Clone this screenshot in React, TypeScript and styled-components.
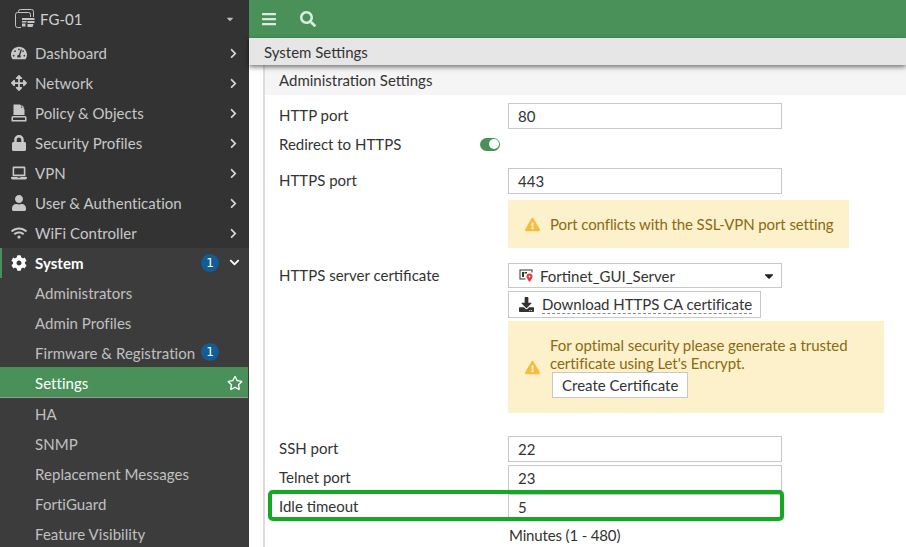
import React from "react";
import styled, { createGlobalStyle } from "styled-components";
import {
  FaTachometerAlt, FaArrowsAlt, FaLock, FaLaptop, FaUser, FaWifi, FaCog, FaRegStar,
  FaExclamationTriangle, FaSearch, FaBars, FaChevronRight, FaChevronDown, FaDownload, FaCaretDown,
} from "react-icons/fa";

const Global = createGlobalStyle`
  html, body { margin: 0; padding: 0; width: 906px; height: 547px; overflow: hidden; background: #fff; }
  body { font-family: Lato, "Open Sans", sans-serif; font-size: 15px; color: #333; }
  * { box-sizing: border-box; }
`;

const Page = styled.div`
  display: flex;
  width: 906px;
  height: 547px;
  overflow: hidden;
  position: relative;
`;

const Sidebar = styled.nav`
  width: 249px;
  flex: none;
  height: 547px;
  background: #3c3c3c;
  color: #c8c8c8;
  display: flex;
  flex-direction: column;
  letter-spacing: 0.05px;
`;

const TopNav = styled.div`
  background: #333;
  height: 248px;
  flex: none;
`;

const DeviceRow = styled.div`
  display: flex;
  align-items: center;
  height: 38px;
  padding-left: 15px;
  gap: 4px;
  color: #d0d0d0;
`;

const DeviceCaret = styled.span`
  margin-left: auto;
  margin-right: 14px;
  display: flex;
  font-size: 10px;
  color: #bbb;
`;

const Item = styled.div<{ $bold?: boolean }>`
  display: flex;
  align-items: center;
  height: 30px;
  padding-left: 11px;
  font-weight: ${(p) => (p.$bold ? 700 : 400)};
  color: ${(p) => (p.$bold ? "#fff" : "#c8c8c8")};
`;

const NavIcon = styled.span`
  width: 24px;
  flex: none;
  display: flex;
  align-items: center;
  font-size: 16px;
  color: inherit;
`;

const Chevron = styled.span`
  margin-left: auto;
  margin-right: 10px;
  display: flex;
  font-size: 11px;
  color: #d8d8d8;
`;

const SystemItem = styled(Item)`
  border-left: 2px solid #4a9159;
  padding-left: 9px;
`;

const SubItem = styled.div<{ $active?: boolean; $after?: boolean }>`
  display: flex;
  align-items: center;
  height: ${(p) => (p.$active ? 31 : 30)}px;
  padding-left: 35px;
  padding-top: ${(p) => (p.$after ? 3 : 1)}px;
  background: ${(p) => (p.$active ? "#4a9159" : "transparent")};
  color: ${(p) => (p.$active ? "#fff" : "#c0c0c0")};
  border-bottom: ${(p) => (p.$active ? "1px solid #9a9a9a" : "none")};
  margin-right: ${(p) => (p.$active ? 1 : 0)}px;
`;

const Badge = styled.span`
  width: 18px;
  height: 18px;
  border-radius: 50%;
  background: #125d96;
  color: #fff;
  font-family: "DejaVu Sans", sans-serif;
  font-size: 12px;
  font-weight: 400;
  display: flex;
  align-items: center;
  justify-content: center;
  flex: none;
`;

const SystemBadge = styled(Badge)`
  margin-left: auto;
`;

const SystemChevron = styled(Chevron)`
  margin-left: 10px;
  margin-right: 9px;
  color: #fff;
`;

const SubBadge = styled(Badge)`
  margin-left: 6px;
  margin-top: -1px;
`;

const StarIcon = styled.span`
  margin-left: auto;
  margin-right: 5px;
  display: flex;
  font-size: 16px;
  color: #fff;
`;

const Main = styled.main`
  flex: 1;
  min-width: 0;
  display: flex;
  flex-direction: column;
  background: #fff;
`;

const TopBar = styled.header`
  height: 38px;
  flex: none;
  background: #4a9159;
  display: flex;
  align-items: center;
  padding-left: 12px;
  gap: 23px;
  color: #dcebdf;
  font-size: 16px;
`;

const SubHeader = styled.div`
  height: 27px;
  flex: none;
  background: #e6e6e6;
  display: flex;
  align-items: center;
  padding-left: 15px;
  color: #333;
  box-shadow: 0 2px 5px rgba(0, 0, 0, 0.55);
  position: relative;
  z-index: 1;
`;

const Panel = styled.section`
  margin-left: 14px;
  border-left: 2px solid #dcdcdc;
  flex: 1;
  display: flex;
  flex-direction: column;
`;

const PanelTitle = styled.div`
  height: 30px;
  flex: none;
  background: #f5f5f5;
  display: flex;
  align-items: center;
  padding-left: 14px;
  color: #333;
`;

const Form = styled.div`
  padding: 8px 0 0 14px;
  display: flex;
  flex-direction: column;
`;

const Row = styled.div<{ $mt?: number }>`
  display: grid;
  grid-template-columns: 229px 1fr;
  align-items: start;
  margin-top: ${(p) => p.$mt ?? 0}px;
`;

const Label = styled.div`
  height: 26px;
  padding-bottom: 2px;
  display: flex;
  align-items: center;
  color: #333;
`;

const SwitchCell = styled.div`
  display: flex;
  align-items: center;
  height: 26px;
  margin-left: -28px;
  padding-bottom: 2px;
`;

const Field = styled.div`
  display: flex;
  flex-direction: column;
  align-items: flex-start;
`;

const Input = styled.div`
  width: 274px;
  height: 26px;
  border: 1px solid #c8c8c8;
  background: #fff;
  display: flex;
  align-items: center;
  padding-left: 9px;
  color: #333;
`;

const Toggle = styled.span`
  width: 20px;
  height: 13px;
  border-radius: 7px;
  background: #4a9159;
  display: flex;
  align-items: center;
  justify-content: flex-end;
  padding-right: 1px;
`;

const Knob = styled.span`
  width: 10px;
  height: 10px;
  border-radius: 50%;
  background: #fff;
`;

const Warning = styled.div<{ $w: number; $h: number; $mt: number; $ls: number }>`
  width: ${(p) => p.$w}px;
  height: ${(p) => p.$h}px;
  margin-top: ${(p) => p.$mt}px;
  background: #fdf1cc;
  color: #8a6a10;
  display: flex;
  align-items: center;
  padding-left: 17px;
  gap: 10px;
  line-height: 18px;
  letter-spacing: ${(p) => p.$ls}px;
`;

const WarnIcon = styled.span`
  color: #f5bd3b;
  display: flex;
  font-size: 15px;
  flex: none;
`;

const WarnBody = styled.div`
  display: flex;
  flex-direction: column;
  align-items: flex-start;
`;

const Select = styled(Input)`
  height: 25px;
  padding-left: 10px;
  gap: 6px;
`;

const SelectCaret = styled.span`
  margin-left: auto;
  margin-right: 5px;
  display: flex;
  font-size: 14px;
  color: #222;
`;

const Button = styled.div`
  height: 27px;
  margin-top: 3px;
  border: 1px solid #c8c8c8;
  background: #fff;
  display: flex;
  align-items: center;
  padding: 0 8px 0 10px;
  gap: 8px;
  color: #333;
  letter-spacing: -0.04px;
`;

const Dashed = styled.span`
  border-bottom: 1px dashed #888;
  line-height: 17px;
`;

const CreateButton = styled.div`
  height: 26px;
  margin: 0 0 0 2px;
  padding: 0 9px;
  border: 1px solid #c8c8c8;
  background: #fff;
  color: #333;
  display: flex;
  align-items: center;
  letter-spacing: 0;
`;

const Hint = styled.div`
  height: 20px;
  margin-top: 5px;
  margin-left: 1px;
  display: flex;
  align-items: center;
  color: #333;
  letter-spacing: -0.15px;
`;

const Highlight = styled.div`
  position: absolute;
  left: 268px;
  top: 490px;
  width: 516px;
  height: 31px;
  border: 4px solid #14a825;
  border-radius: 5px;
  box-shadow: 0 0 1px rgba(0, 0, 0, 0.5);
  pointer-events: none;
`;

const PolicyIcon = () => (
  <svg width="16" height="18" viewBox="0 0 16 18" fill="currentColor">
    <path d="M2.500 0.500h6.500l1 1v2.500h2.500l1 1.500v5.500H2.500z" />
    <path d="M10.500 0.700l3 3h-3z" />
    <path d="M2 12h12a1.500 1.500 0 0 1 1.500 1.500V17.500H.5v-4A1.500 1.500 0 0 1 2 12zm0 1.500V16h12v-2.500z" fillRule="evenodd" />
  </svg>
);

const DeviceIcon = () => (
  <svg width="21" height="20" viewBox="0 0 21 20" fill="none" stroke="#c4c4c4" strokeWidth="1">
    <rect x="3.500" y="0.500" width="15" height="15" rx="2" />
    <rect x="0.500" y="3.500" width="15" height="15" rx="2" fill="#333" />
    <rect x="6" y="8" width="15" height="11" fill="#333" stroke="none" />
    <path d="M7 9h12.500v2H7z" fill="#c4c4c4" stroke="none" />
    <path d="M7 12h4.500v1.600H7zM7 14.600h3.500v2.900H7zM12.500 12h7v2h-7zM12.500 15h6l-1 3h-5z" fill="#c4c4c4" stroke="none" />
  </svg>
);

const CertIcon = () => (
  <svg width="15" height="15" viewBox="0 0 15 15">
    <path d="M0.500 1.500h13v3h-1v-2h-11v8h5v1h-6z" fill="#333" />
    <path d="M3 4h2v5H3zM5.500 4H8v1.500H5.500z" fill="#333" />
    <path d="M10.500 5.500a3 3 0 0 1 3 3c0 2-3 5.500-3 5.500s-3-3.500-3-5.500a3 3 0 0 1 3-3z" fill="#e4343c" />
    <circle cx="10.500" cy="8.500" r="1" fill="#fff" />
  </svg>
);

const nav: [React.ReactNode, string][] = [
  [<FaTachometerAlt />, "Dashboard"],
  [<FaArrowsAlt />, "Network"],
  [<PolicyIcon />, "Policy & Objects"],
  [<FaLock />, "Security Profiles"],
  [<FaLaptop />, "VPN"],
  [<FaUser />, "User & Authentication"],
  [<FaWifi />, "WiFi Controller"],
];

export default function App() {
  return (
    <Page>
      <Global />
      <Sidebar>
        <TopNav>
          <DeviceRow>
            <DeviceIcon />
            FG-01
            <DeviceCaret><FaCaretDown /></DeviceCaret>
          </DeviceRow>
          {nav.map(([icon, label]) => (
            <Item key={label}>
              <NavIcon>{icon}</NavIcon>
              {label}
              <Chevron><FaChevronRight /></Chevron>
            </Item>
          ))}
        </TopNav>
        <SystemItem $bold>
          <NavIcon><FaCog /></NavIcon>
          System
          <SystemBadge>1</SystemBadge>
          <SystemChevron><FaChevronDown /></SystemChevron>
        </SystemItem>
        <SubItem>Administrators</SubItem>
        <SubItem>Admin Profiles</SubItem>
        <SubItem>Firmware &amp; Registration<SubBadge>1</SubBadge></SubItem>
        <SubItem $active>Settings<StarIcon><FaRegStar /></StarIcon></SubItem>
        <SubItem $after>HA</SubItem>
        <SubItem $after>SNMP</SubItem>
        <SubItem $after>Replacement Messages</SubItem>
        <SubItem $after>FortiGuard</SubItem>
        <SubItem $after>Feature Visibility</SubItem>
      </Sidebar>
      <Main>
        <TopBar>
          <FaBars />
          <FaSearch />
        </TopBar>
        <SubHeader>System Settings</SubHeader>
        <Panel>
          <PanelTitle>Administration Settings</PanelTitle>
          <Form>
            <Row>
              <Label>HTTP port</Label>
              <Input>80</Input>
            </Row>
            <Row $mt={3}>
              <Label>Redirect to HTTPS</Label>
              <SwitchCell><Toggle><Knob /></Toggle></SwitchCell>
            </Row>
            <Row $mt={10}>
              <Label>HTTPS port</Label>
              <Field>
                <Input>443</Input>
                <Warning $w={341} $h={48} $mt={6} $ls={-0.1}>
                  <WarnIcon><FaExclamationTriangle /></WarnIcon>
                  Port conflicts with the SSL-VPN port setting
                </Warning>
              </Field>
            </Row>
            <Row $mt={15}>
              <Label>HTTPS server certificate</Label>
              <Field>
                <Select>
                  <CertIcon />
                  Fortinet_GUI_Server
                  <SelectCaret><FaCaretDown /></SelectCaret>
                </Select>
                <Button>
                  <FaDownload />
                  <Dashed>Download HTTPS CA certificate</Dashed>
                </Button>
                <Warning $w={376} $h={92} $mt={3} $ls={-0.05}>
                  <WarnIcon><FaExclamationTriangle /></WarnIcon>
                  <WarnBody>
                    For optimal security please generate a trusted
                    <br />
                    certificate using Let's Encrypt.
                    <CreateButton>Create Certificate</CreateButton>
                  </WarnBody>
                </Warning>
              </Field>
            </Row>
            <Row $mt={23}>
              <Label>SSH port</Label>
              <Input>22</Input>
            </Row>
            <Row $mt={3}>
              <Label>Telnet port</Label>
              <Input>23</Input>
            </Row>
            <Row $mt={3}>
              <Label>Idle timeout</Label>
              <Field>
                <Input>5</Input>
                <Hint>Minutes (1 - 480)</Hint>
              </Field>
            </Row>
          </Form>
        </Panel>
      </Main>
      <Highlight />
    </Page>
  );
}
